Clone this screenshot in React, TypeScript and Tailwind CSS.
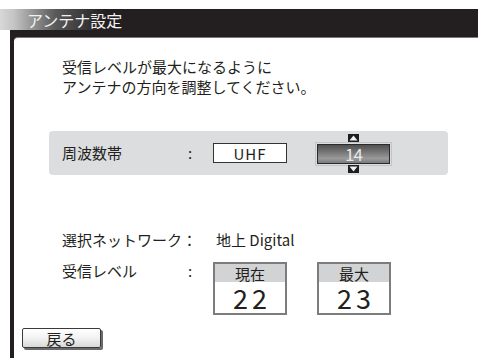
import React from "react";

const jp = { fontFamily: '"Noto Sans CJK JP", "Noto Sans", sans-serif' };

function ArrowUp() {
  return (
    <div className="w-[11px] h-[8px] bg-[#1e1e1e] flex items-center justify-center">
      <svg width="9" height="6" viewBox="0 0 9 6">
        <polygon points="4.5,0.5 8.5,5.5 0.5,5.5" fill="#f2f2f2" />
      </svg>
    </div>
  );
}

function ArrowDown() {
  return (
    <div className="w-[11px] h-[8px] bg-[#1e1e1e] flex items-center justify-center">
      <svg width="9" height="6" viewBox="0 0 9 6">
        <polygon points="0.5,0.5 8.5,0.5 4.5,5.5" fill="#f2f2f2" />
      </svg>
    </div>
  );
}

function LevelBox({ label, value }: { label: string; value: string }) {
  return (
    <div className="w-[74px] h-[53px] border-2 border-[#7c7c7c] bg-white flex flex-col">
      <div className="h-[18px] bg-[#d2d3d5] flex items-center justify-center text-[15px] leading-none text-[#231f20]">
        {label}
      </div>
      <div className="h-[31px] flex items-center justify-center text-[27px] leading-[27px] tracking-[4px] text-[#231f20] pl-[4px]">
        {value}
      </div>
    </div>
  );
}

export default function App() {
  return (
    <div className="w-[478px] h-[358px] bg-white overflow-hidden flex flex-col text-[#231f20]" style={jp}>
      <div className="h-[9px] bg-white" />
      <div className="h-[21px] bg-[linear-gradient(to_right,#d8d8d8_0px,#c4c4c4_14px,#5a5a5a_55px,#231f20_105px)] flex items-center pl-[27px]">
        <span className="text-[16px] leading-none text-[#f2f2f2]">アンテナ設定</span>
      </div>
      <div className="flex-1 ml-[10px] bg-[#231f20] pt-[7px] pl-[4px] flex flex-col">
        <div className="flex-1 bg-white rounded-tl-[4px] border-t border-[#7a7a7a] flex flex-col">
          <div className="pl-[48px] pt-[19px] text-[15px] leading-[20px]">
            <div>受信レベルが最大になるように</div>
            <div>アンテナの方向を調整してください。</div>
          </div>

          <div className="mt-[34px] ml-[35px] w-[399px] h-[44px] rounded-[4px] bg-[#dcdddf] flex items-center pl-[13px]">
            <div className="w-[126px] text-[15px]">周波数帯</div>
            <div className="w-[25px] text-[15px]">:</div>
            <div className="w-[74px] h-[20px] bg-white border border-[#333] flex items-center justify-center text-[15px] leading-none tracking-[1px]">
              UHF
            </div>
            <div className="ml-[28px] flex flex-col items-center">
              <ArrowUp />
              <div className="w-[77px] h-[24px] border border-[#c4c4c4] p-[1px]">
                <div className="w-full h-full border border-[#2a2a2a] bg-[linear-gradient(to_bottom,#505050_0%,#777_40%,#9a9a9a_75%,#7a7a7a_100%)] flex items-center justify-center text-[17px] leading-none text-[#e6e6e6] tracking-[-1px]">
                  14
                </div>
              </div>
              <div className="-mt-[1px]">
                <ArrowDown />
              </div>
            </div>
          </div>

          <div className="mt-[55px] pl-[48px] flex items-center h-[20px] text-[15px]">
            <div className="w-[154px]">選択ネットワーク：</div>
            <div>地上 Digital</div>
          </div>

          <div className="mt-[12px] pl-[48px] flex items-start text-[15px]">
            <div className="w-[126px] mt-[-1px] h-[20px] leading-[20px]">受信レベル</div>
            <div className="w-[25px] mt-[-1px] h-[20px] leading-[20px]">:</div>
            <LevelBox label="現在" value="22" />
            <div className="ml-[30px]">
              <LevelBox label="最大" value="23" />
            </div>
          </div>

          <div className="mt-[13px] ml-[8px]">
            <div className="w-[79px] h-[20px] rounded-[2px] border border-[#3a3a3a] bg-[linear-gradient(to_bottom,#ffffff_0%,#f2f2f2_50%,#d8d8d8_100%)] shadow-[2px_2px_0_#6a6a6a] flex items-center justify-center text-[15px] leading-none">
              戻る
            </div>
          </div>
        </div>
      </div>
    </div>
  );
}
